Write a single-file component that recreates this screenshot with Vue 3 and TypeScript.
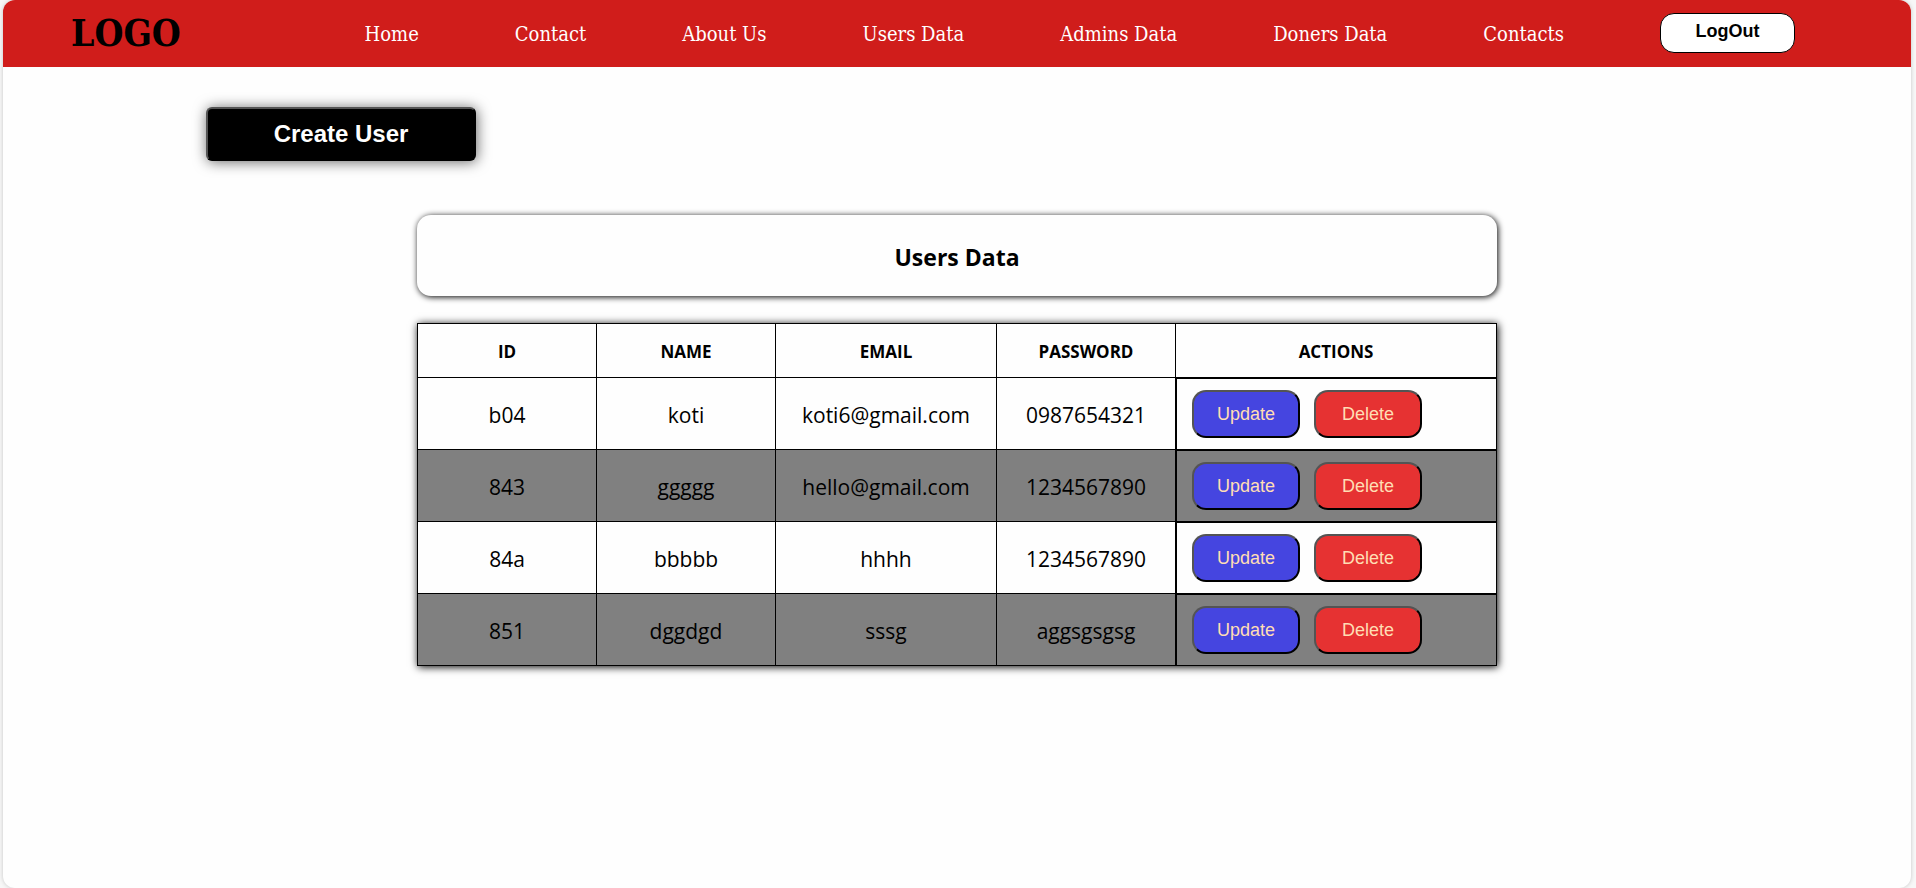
<script setup lang="ts">
interface User {
  id: string
  name: string
  email: string
  password: string
}

const links: string[] = [
  'Home',
  'Contact',
  'About Us',
  'Users Data',
  'Admins Data',
  'Doners Data',
  'Contacts',
]

const columns: string[] = ['ID', 'NAME', 'EMAIL', 'PASSWORD', 'ACTIONS']

const users: User[] = [
  { id: 'b04', name: 'koti', email: 'koti6@gmail.com', password: '0987654321' },
  { id: '843', name: 'ggggg', email: 'hello@gmail.com', password: '1234567890' },
  { id: '84a', name: 'bbbbb', email: 'hhhh', password: '1234567890' },
  { id: '851', name: 'dggdgd', email: 'sssg', password: 'aggsgsgsg' },
]
</script>

<template>
  <div class="shell">
    <header class="navbar">
      <div class="logo">LOGO</div>
      <nav class="menu">
        <a v-for="link in links" :key="link" class="menu-link" href="#">{{ link }}</a>
        <button class="logout" type="button">LogOut</button>
      </nav>
    </header>

    <main>
      <button class="create" type="button">Create User</button>

      <section class="panel">
        <h2 class="title">Users Data</h2>
        <table class="users">
          <colgroup>
            <col class="col-id" />
            <col class="col-name" />
            <col class="col-email" />
            <col class="col-password" />
            <col class="col-actions" />
          </colgroup>
          <thead>
            <tr>
              <th v-for="column in columns" :key="column" scope="col">{{ column }}</th>
            </tr>
          </thead>
          <tbody>
            <tr v-for="user in users" :key="user.id">
              <td>{{ user.id }}</td>
              <td>{{ user.name }}</td>
              <td>{{ user.email }}</td>
              <td>{{ user.password }}</td>
              <td class="actions-cell">
                <div class="actions">
                  <button class="action update" type="button">Update</button>
                  <button class="action delete" type="button">Delete</button>
                </div>
              </td>
            </tr>
          </tbody>
        </table>
      </section>
    </main>
  </div>
</template>

<style>
body {
  background: #f7f7f7;
}
</style>

<style scoped>
.shell {
  box-sizing: border-box;
  min-height: 100vh;
  margin: 0 5px 0 3px;
  overflow: hidden;
  background: #fefefe;
  border-radius: 12px;
  box-shadow: 0 0 4px rgba(0, 0, 0, 0.2);
  color: #000;
  font-family: 'Open Sans', 'Noto Sans', sans-serif;
}

.navbar {
  display: flex;
  align-items: center;
  justify-content: space-between;
  box-sizing: border-box;
  height: 67px;
  padding: 0 116px 2px 68px;
  background: #d01d1b;
  font-family: 'DejaVu Serif Condensed', 'Liberation Serif', serif;
}

.logo {
  font-size: 37px;
  font-weight: bold;
}

.menu {
  display: flex;
  align-items: center;
  gap: 96px;
}

.menu-link {
  padding-top: 2px;
  color: #fff;
  font-size: 20px;
  text-decoration: none;
  white-space: nowrap;
}

.logout {
  width: 135px;
  height: 40px;
  padding: 0 0 2px;
  background: #fff;
  border: 1px solid #000;
  border-radius: 14px;
  color: #000;
  font: bold 18px 'Liberation Sans', sans-serif;
}

.create {
  display: block;
  width: 270px;
  height: 54px;
  margin: 40px 0 0 203px;
  padding: 0;
  background: #000;
  border: 2px outset #000;
  border-radius: 6px;
  box-shadow: 1px 1px 14px rgba(0, 0, 0, 0.6);
  color: #fff;
  font: bold 24px 'Liberation Sans', sans-serif;
}

.panel {
  width: 1080px;
  max-width: 100%;
  margin: 54px auto 0;
}

.title {
  margin: 0 0 27px;
  padding: 26px 0 23px;
  border-radius: 14px;
  box-shadow: 1px 1px 6px #000;
  font-size: 23px;
  line-height: 32px;
  text-align: center;
}

.users {
  width: 100%;
  border-collapse: collapse;
  table-layout: fixed;
  box-shadow: 1px 1px 8px #000;
  text-align: center;
}

.col-id,
.col-name,
.col-password {
  width: 179px;
}

.col-email {
  width: 221px;
}

.users th {
  box-sizing: border-box;
  height: 54px;
  padding: 2px 0 0;
  border: 1px solid #000;
  font-size: 17px;
}

.users td {
  height: 71px;
  padding: 2px 0 0;
  border: 1px solid #000;
  font-size: 21px;
  box-sizing: border-box;
}

.users tbody tr:nth-child(even) {
  background: #808080;
}

.users .actions-cell {
  padding: 0;
}

.actions {
  display: flex;
  align-items: center;
  box-sizing: border-box;
  gap: 14px;
  height: 71px;
  padding-left: 15px;
  border: solid #000;
  border-width: 1px 0 0 1px;
}

.action {
  width: 108px;
  height: 48px;
  padding: 0;
  border: 2px outset #000;
  border-radius: 14px;
  color: #ffdeb4;
  font: 18px 'Liberation Sans', sans-serif;
}

.update {
  background: #4545e0;
}

.delete {
  background: #e63232;
}
</style>
